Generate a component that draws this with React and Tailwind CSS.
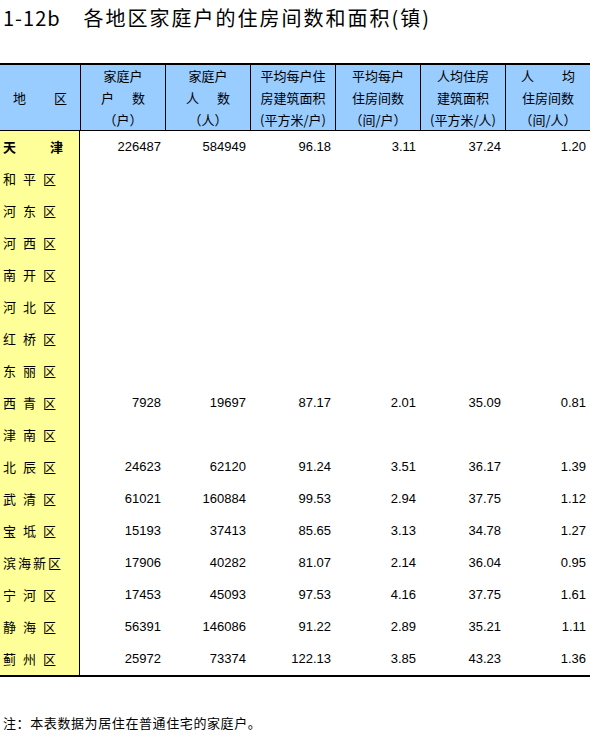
const rows = [
  { name: '天津', kind: 'bold', v: ['226487', '584949', '96.18', '3.11', '37.24', '1.20'] },
  { name: '和平区' },
  { name: '河东区' },
  { name: '河西区' },
  { name: '南开区' },
  { name: '河北区' },
  { name: '红桥区' },
  { name: '东丽区' },
  { name: '西青区', v: ['7928', '19697', '87.17', '2.01', '35.09', '0.81'] },
  { name: '津南区' },
  { name: '北辰区', v: ['24623', '62120', '91.24', '3.51', '36.17', '1.39'] },
  { name: '武清区', v: ['61021', '160884', '99.53', '2.94', '37.75', '1.12'] },
  { name: '宝坻区', v: ['15193', '37413', '85.65', '3.13', '34.78', '1.27'] },
  { name: '滨海新区', v: ['17906', '40282', '81.07', '2.14', '36.04', '0.95'] },
  { name: '宁河区', v: ['17453', '45093', '97.53', '4.16', '37.75', '1.61'] },
  { name: '静海区', v: ['56391', '146086', '91.22', '2.89', '35.21', '1.11'] },
  { name: '蓟州区', v: ['25972', '73374', '122.13', '3.85', '43.23', '1.36'] },
];

const cjk = { fontFamily: "'Noto Sans CJK SC', 'Liberation Sans', sans-serif" };
const num = { fontFamily: "'Liberation Sans', Arial, sans-serif" };

function Spread({ a, b, w }) {
  return (
    <div className={`flex justify-between ${w}`}>
      <span>{a}</span>
      <span>{b}</span>
    </div>
  );
}

function NameCell({ row }) {
  if (row.kind === 'bold') {
    return (
      <div className="flex w-[60px] justify-between font-bold">
        <span>天</span>
        <span>津</span>
      </div>
    );
  }
  if (row.name.length === 4) {
    return <span className="tracking-[2px]">{row.name}</span>;
  }
  return <span className="tracking-[7px]">{row.name}</span>;
}

export default function App() {
  const headCell = 'flex flex-col items-center justify-center leading-[22px] border-l border-black';
  return (
    <div className="w-[590px] h-[739px] bg-white text-black" style={cjk}>
      <div className="h-[63px] pt-[5px] pl-[3px] text-[20px] leading-[26px] font-normal">
        <span className="tracking-[1px]">1-12b</span>
        <span className="ml-[23px] tracking-[2px]">各地区家庭户的住房间数和面积(镇)</span>
      </div>

      <div className="border-t-2 border-b-2 border-black">
        <div className="grid grid-cols-[80px_repeat(6,85px)] h-[66px] bg-[#99ccff] border-b border-black text-[13px]">
          <div className="flex items-center justify-center">
            <Spread a="地" b="区" w="w-[54px]" />
          </div>
          <div className={headCell}>
            <span>家庭户</span>
            <Spread a="户" b="数" w="w-[44px]" />
            <span>（户）</span>
          </div>
          <div className={headCell}>
            <span>家庭户</span>
            <Spread a="人" b="数" w="w-[44px]" />
            <span>（人）</span>
          </div>
          <div className={headCell}>
            <span>平均每户住</span>
            <span>房建筑面积</span>
            <span>(平方米/户)</span>
          </div>
          <div className={headCell}>
            <span>平均每户</span>
            <span>住房间数</span>
            <span>（间/户）</span>
          </div>
          <div className={headCell}>
            <span>人均住房</span>
            <span>建筑面积</span>
            <span>(平方米/人)</span>
          </div>
          <div className={headCell}>
            <Spread a="人" b="均" w="w-[54px]" />
            <span>住房间数</span>
            <span>（间/人）</span>
          </div>
        </div>

        {rows.map((r) => (
          <div key={r.name} className="grid grid-cols-[80px_repeat(6,85px)] h-[32px] text-[13px]">
            <div className="flex items-center pl-[3px] bg-[#ffff99] border-r border-black">
              <NameCell row={r} />
            </div>
            {(r.v || ['', '', '', '', '', '']).map((x, i) => (
              <div key={i} className="flex items-center justify-end pr-[4px]" style={num}>
                {x}
              </div>
            ))}
          </div>
        ))}
      </div>

      <div className="pt-[37px] pl-[3px] text-[13px] leading-[18px] tracking-[0.6px]">
        注：本表数据为居住在普通住宅的家庭户。
      </div>
    </div>
  );
}
